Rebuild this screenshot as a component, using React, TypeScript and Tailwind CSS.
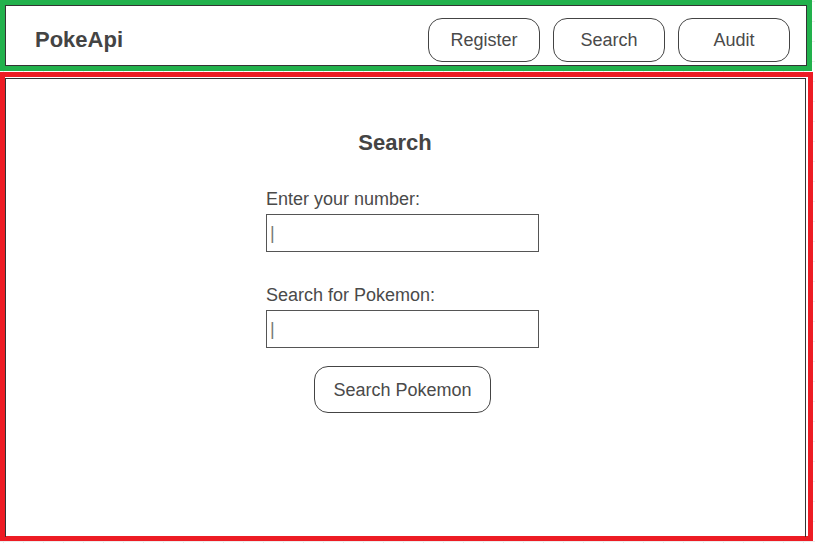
import React from 'react';

const NavButton: React.FC<{ label: string }> = ({ label }) => (
  <button className="w-[112px] h-[44px] rounded-[14px] border border-[#444] bg-white text-[18px] text-[#4a4a4a] pt-[1px]">
    {label}
  </button>
);

const Field: React.FC<{ label: string; top: string }> = ({ label, top }) => (
  <div className={`flex flex-col ${top}`}>
    <label className="text-[18px] leading-[21px] text-[#4a4a4a]">{label}</label>
    <input
      type="text"
      placeholder="|"
      className="mt-[4px] w-[273px] h-[38px] border border-[#555] pl-[3px] text-[18px] text-[#444] outline-none placeholder:text-[#777]"
    />
  </div>
);

export default function App() {
  return (
    <div
      className="w-[815px] h-[543px] overflow-hidden bg-white bg-[linear-gradient(to_right,#ececec_1px,transparent_1px),linear-gradient(to_bottom,#ececec_1px,transparent_1px)] bg-[size:20px_20px] bg-[position:3px_1px]"
      style={{ fontFamily: '"Liberation Sans", Arial, sans-serif' }}
    >
      {/* header */}
      <div className="w-[812px] h-[71px] border-[5px] border-[#22b14c] bg-white">
        <div className="h-full border border-[#333] flex items-center justify-between pl-[29px] pr-[16px] pt-[8px]">
          <span className="text-[22px] font-bold text-[#444]">PokeApi</span>
          <div className="flex gap-[13px]">
            <NavButton label="Register" />
            <NavButton label="Search" />
            <NavButton label="Audit" />
          </div>
        </div>
      </div>

      {/* main */}
      <div className="mt-[1px] w-[813px] h-[469px] border-[5px] border-[#ed1c24] bg-white">
        <div className="h-full border-l border-t border-r border-[#333] mt-[1px] mr-[2px] pl-[260px] pt-[51px]">
          <div className="w-[273px] flex flex-col">
            <h1 className="text-[22px] leading-[26px] font-bold text-[#444] text-center pr-[15px]">Search</h1>
            <Field label="Enter your number:" top="mt-[33px]" />
            <Field label="Search for Pokemon:" top="mt-[33px]" />
            <div className="flex justify-center mt-[18px]">
              <button className="w-[177px] h-[47px] rounded-[14px] border border-[#444] bg-white text-[18px] text-[#4a4a4a] pt-[2px]">
                Search Pokemon
              </button>
            </div>
          </div>
        </div>
      </div>
    </div>
  );
}
